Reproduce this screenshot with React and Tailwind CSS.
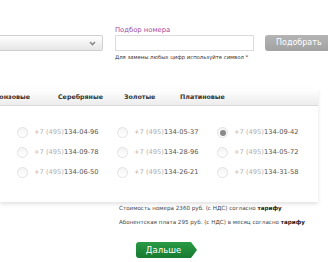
import React from "react";

const font = { fontFamily: '"DejaVu Sans", Verdana, sans-serif' };

function Radio({ checked }) {
  return (
    <span className="flex h-[11px] w-[11px] shrink-0 items-center justify-center rounded-full border border-[#e2e2e2] bg-gradient-to-b from-[#f4f4f4] to-[#ffffff]">
      {checked && <span className="h-[6px] w-[6px] rounded-full bg-[#8a8a8a]" />}
    </span>
  );
}

function Phone({ num, checked }) {
  return (
    <div className="flex items-center gap-[6px]">
      <Radio checked={checked} />
      <span className="text-[6.7px] leading-none text-[#555]">
        <span className="text-[#b0b0b0]">+7 (495)</span>
        {num}
      </span>
    </div>
  );
}

export default function App() {
  const cols = [
    ["134-04-96", "134-09-78", "134-06-50"],
    ["134-05-37", "134-28-96", "134-26-21"],
    ["134-09-42", "134-05-72", "134-31-58"],
  ];
  return (
    <div className="relative h-[262px] w-[328px] overflow-hidden bg-white" style={font}>
      {/* search row */}
      <div className="flex items-start pt-[25px]">
        <div className="mt-[10px] flex h-[16px] w-[103px] shrink-0 items-center justify-end rounded-r-[2px] border border-l-0 border-[#cfcfcf] bg-gradient-to-b from-[#ffffff] to-[#e6e6e6] pr-[6px]">
          <svg width="7" height="5" viewBox="0 0 7 5">
            <path d="M1 1 L3.5 3.5 L6 1" fill="none" stroke="#8a8a8a" strokeWidth="1.6" />
          </svg>
        </div>
        <div className="ml-[12px] flex shrink-0 flex-col">
          <div className="h-[10px] text-[6.8px] leading-[10px] text-[#a2499f]">Подбор номера</div>
          <div className="h-[16px] w-[139px] border border-[#dcdcdc] bg-white" />
          <div className="mt-[3px] whitespace-nowrap text-[5.3px] leading-[7px] text-[#333]">Для замены любых цифр используйте символ *</div>
        </div>
        <div className="ml-[11px] mt-[10px] flex h-[16px] w-[70px] shrink-0 items-center rounded-[3px] bg-gradient-to-b from-[#b4b4b4] to-[#a2a2a2] pl-[11px] text-[8px] text-white">
          Подобрать
        </div>
      </div>

      {/* panel */}
      <div className="mt-[28px] w-[318px] bg-white shadow-[0_2px_4px_rgba(0,0,0,0.12)]">
        <div className="relative flex h-[17px] items-center border-b border-[#dadada] bg-gradient-to-b from-[#ffffff] to-[#ececec] text-[6.3px] font-bold text-[#333]">
          <span className="absolute left-[-10px]">Бронзовые</span>
          <span className="absolute left-[58px]">Серебряные</span>
          <span className="absolute left-[124px]">Золотые</span>
          <span className="absolute left-[180px]">Платиновые</span>
        </div>
        <div className="flex pb-[24px] pl-[17px] pt-[21px]">
          {cols.map((c, ci) => (
            <div key={ci} className="flex w-[100px] flex-col gap-[9px]">
              {c.map((n, ri) => (
                <Phone key={n} num={n} checked={ci === 2 && ri === 0} />
              ))}
            </div>
          ))}
        </div>
      </div>

      {/* info */}
      <div className="ml-[119px] mt-[2px] flex flex-col gap-[6px] whitespace-nowrap text-[5.6px] leading-[8px] text-[#444]">
        <div>
          Стоимость номера 2360 руб. (с НДС) согласно <b className="text-[#222]">тарифу</b>
        </div>
        <div>
          Абонентская плата 295 руб. (с НДС) в месяц согласно <b className="text-[#222]">тарифу</b>
        </div>
      </div>

      {/* next button */}
      <div className="ml-[136px] mt-[16px] flex h-[16px] items-stretch">
        <div className="flex w-[53px] items-center justify-center rounded-l-[3px] bg-gradient-to-b from-[#2a9a45] to-[#167a30] pl-[2px] text-[8.5px] text-white">
          Дальше
        </div>
        <svg width="8" height="16" viewBox="0 0 8 16" className="block">
          <defs>
            <linearGradient id="g" x1="0" y1="0" x2="0" y2="1">
              <stop offset="0" stopColor="#2a9a45" />
              <stop offset="1" stopColor="#167a30" />
            </linearGradient>
          </defs>
          <path d="M0 0 L2 0 L8 8 L2 16 L0 16 Z" fill="url(#g)" />
        </svg>
      </div>
    </div>
  );
}
